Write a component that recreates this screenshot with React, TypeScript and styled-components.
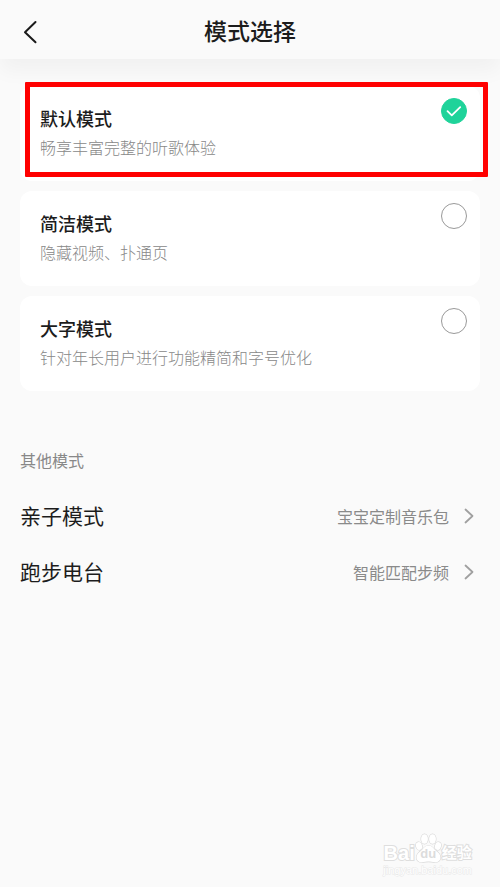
import React, { useState } from 'react';
import styled, { createGlobalStyle, css } from 'styled-components';

const GlobalStyle = createGlobalStyle`
  *, *::before, *::after { box-sizing: border-box; }
  body {
    margin: 0;
    background: #fafafa;
    color: #1c1c1c;
    font-family: 'Noto Sans CJK SC', sans-serif;
  }
  button { font: inherit; color: inherit; }
`;

const Page = styled.div`
  display: flex;
  flex-direction: column;
  min-height: 100vh;
`;

const Header = styled.header`
  display: grid;
  grid-template-columns: 60px 1fr 60px;
  align-items: center;
  height: 59px;
  padding-top: 4px;
  background: #fafafa;
  box-shadow: 0 12px 20px rgba(0, 0, 0, 0.04);
`;

const BackButton = styled.button`
  display: flex;
  align-items: center;
  justify-content: center;
  height: 44px;
  padding: 0;
  border: 0;
  background: none;
  cursor: pointer;
`;

const Title = styled.h1`
  margin: 0;
  padding-bottom: 4px;
  font-size: 23px;
  line-height: 32px;
  font-weight: 500;
  text-align: center;
`;

const Modes = styled.fieldset`
  display: flex;
  flex-direction: column;
  gap: 10px;
  margin: 27px 20px 0;
  padding: 0;
  border: 0;
`;

const Card = styled.label<{ $framed?: boolean }>`
  position: relative;
  display: flex;
  align-items: flex-start;
  justify-content: space-between;
  min-height: 95px;
  padding: 12px 13px 12px 20px;
  border-radius: 12px;
  background: #fff;
  cursor: pointer;

  ${({ $framed }) =>
    $framed &&
    css`
      &::after {
        content: '';
        position: absolute;
        inset: -4px -8px 4px 5px;
        border: 5px solid #f00;
        border-radius: 1px;
        pointer-events: none;
      }
    `}
`;

const CardText = styled.span`
  display: flex;
  flex-direction: column;
  gap: 4px;
  padding-top: 7px;
`;

const CardName = styled.span`
  font-size: 18px;
  line-height: 26px;
  font-weight: 500;
`;

const CardNote = styled.span`
  font-size: 16px;
  line-height: 24px;
  font-weight: 300;
  color: #888;
`;

const RadioWrap = styled.span`
  position: relative;
  display: flex;
  flex: none;
  width: 26px;
  height: 26px;
`;

const Radio = styled.input`
  appearance: none;
  width: 26px;
  height: 26px;
  margin: 0;
  border: 1px solid #999;
  border-radius: 50%;
  cursor: pointer;

  &:checked {
    border-color: #1fd39a;
    background: #1fd39a;
  }
`;

const Tick = styled.svg`
  position: absolute;
  inset: 0;
  pointer-events: none;
`;

const Others = styled.section`
  margin: 57px 20px 0;
`;

const SectionTitle = styled.h2`
  margin: 0 0 16px;
  font-size: 16px;
  line-height: 24px;
  font-weight: 400;
  color: #888;
`;

const LinkRow = styled.a`
  display: flex;
  align-items: center;
  height: 56px;
  color: inherit;
  text-decoration: none;
`;

const LinkName = styled.span`
  flex: 1;
  padding-bottom: 2px;
  font-size: 21px;
  line-height: 30px;
`;

const LinkNote = styled.span`
  margin-right: 15px;
  font-size: 16px;
  line-height: 24px;
  color: #8a8a8a;
`;

const Chevron = styled.svg`
  margin-right: 6px;
`;

const Watermark = styled.footer`
  display: flex;
  flex-direction: column;
  align-items: center;
  align-self: flex-end;
  margin: auto 28px 10px 0;
  font-family: 'Liberation Sans', 'Noto Sans CJK SC', sans-serif;
  color: #fff;
`;

const Brand = styled.div`
  display: flex;
  align-items: flex-end;
  height: 31px;
  font-size: 20px;
  line-height: 22px;
  font-weight: 700;
  -webkit-text-stroke: 2px #dedede;
  paint-order: stroke fill;
`;

const BrandSuffix = styled.span`
  font-size: 15px;
`;

const PawWrap = styled.span`
  display: grid;
  place-items: end center;
  width: 27px;
  height: 31px;

  > * { grid-area: 1 / 1; }
`;

const PawText = styled.span`
  font-size: 13px;
  line-height: 20px;
  color: #dcdcdc;
  -webkit-text-stroke: 0;
`;

const Site = styled.div`
  font-size: 11px;
  line-height: 13px;
  -webkit-text-stroke: 1px #e8e8e8;
  paint-order: stroke fill;
`;

const modes = [
  { id: 'default', name: '默认模式', note: '畅享丰富完整的听歌体验' },
  { id: 'simple', name: '简洁模式', note: '隐藏视频、扑通页' },
  { id: 'large', name: '大字模式', note: '针对年长用户进行功能精简和字号优化' },
];

const links = [
  { name: '亲子模式', note: '宝宝定制音乐包' },
  { name: '跑步电台', note: '智能匹配步频' },
];

export default function App() {
  const [selected, setSelected] = useState('default');

  return (
    <>
      <GlobalStyle />
      <Page>
        <Header>
          <BackButton type="button" aria-label="返回">
            <svg width="14" height="24" viewBox="0 0 14 24" fill="none" stroke="#1a1a1a" strokeWidth="2" strokeLinecap="round" strokeLinejoin="round">
              <path d="M12.5 2 2 12.2 12.5 22.3" />
            </svg>
          </BackButton>
          <Title>模式选择</Title>
        </Header>

        <Modes aria-label="模式选择">
          {modes.map(({ id, name, note }) => (
            <Card key={id} $framed={id === 'default'}>
              <CardText>
                <CardName>{name}</CardName>
                <CardNote>{note}</CardNote>
              </CardText>
              <RadioWrap>
                <Radio type="radio" name="mode" value={id} checked={selected === id} onChange={() => setSelected(id)} />
                {selected === id && (
                  <Tick width="26" height="26" viewBox="0 0 26 26" fill="none" stroke="#fff" strokeWidth="1.8" strokeLinecap="round" strokeLinejoin="round">
                    <path d="m6.5 13.2 4.3 4.2 8.4-8.2" />
                  </Tick>
                )}
              </RadioWrap>
            </Card>
          ))}
        </Modes>

        <Others>
          <SectionTitle>其他模式</SectionTitle>
          {links.map(({ name, note }) => (
            <LinkRow key={name} href="#">
              <LinkName>{name}</LinkName>
              <LinkNote>{note}</LinkNote>
              <Chevron width="10" height="16" viewBox="0 0 10 16" fill="none" stroke="#a0a0a0" strokeWidth="1.8" strokeLinecap="round" strokeLinejoin="round">
                <path d="m1.5 1.5 7 6.5-7 6.5" />
              </Chevron>
            </LinkRow>
          ))}
        </Others>

        <Watermark>
          <Brand>
            <span>Bai</span>
            <PawWrap>
              <svg width="27" height="31" viewBox="0 0 27 31" fill="#fff" stroke="#d8d8d8" strokeWidth="1.2">
                <ellipse cx="4" cy="13" rx="3" ry="4" transform="rotate(-15 4 13)" />
                <ellipse cx="9.5" cy="6" rx="3.4" ry="4.8" />
                <ellipse cx="17.5" cy="6" rx="3.4" ry="4.8" />
                <ellipse cx="23" cy="13" rx="3" ry="4" transform="rotate(15 23 13)" />
                <path d="M13.5 12.5c-3 0-4.3 2-6.3 4.2-2.500 2.300-5.700 4-5.700 7.700 0 3 2.500 4.800 5.300 4.800 2.400 0 4.500-.6 6.700-.6s4.300.6 6.700.6c2.800 0 5.300-1.800 5.300-4.800 0-3.700-3.200-5.400-5.700-7.700-2-2.200-3.300-4.200-6.300-4.200Z" />
              </svg>
              <PawText>du</PawText>
            </PawWrap>
            <BrandSuffix>经验</BrandSuffix>
          </Brand>
          <Site>jingyan.baidu.com</Site>
        </Watermark>
      </Page>
    </>
  );
}
